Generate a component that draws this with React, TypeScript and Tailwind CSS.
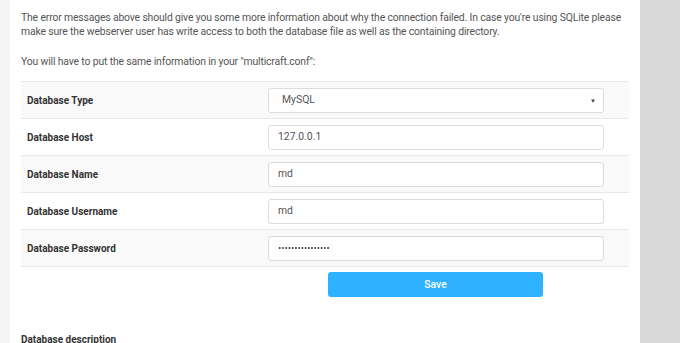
import React from "react";

const rows = [
  { label: "Database Type", kind: "select", value: "MySQL" },
  { label: "Database Host", kind: "text", value: "127.0.0.1" },
  { label: "Database Name", kind: "text", value: "md" },
  { label: "Database Username", kind: "text", value: "md" },
  { label: "Database Password", kind: "password", value: "••••••••••••••••" },
];

const App = () => {
  return (
    <div
      className="flex h-[343px] w-[680px] overflow-hidden bg-[#f5f5f5] text-[#555]"
      style={{ fontFamily: "Roboto, 'Liberation Sans', sans-serif" }}
    >
      <div className="ml-[10px] w-[630px] shrink-0 bg-white px-[11px] pt-[11px]">
        <p className="text-[10.4px] leading-[14px] tracking-[-0.15px]">
          The error messages above should give you some more information about why the connection failed. In case
          you're using SQLite please make sure the webserver user has write access to both the database file as well
          as the containing directory.
        </p>
        <p className="mt-[16px] text-[10.4px] leading-[14px] tracking-[-0.15px]">
          You will have to put the same information in your "multicraft.conf":
        </p>
        <div className="mt-[12px] w-[608px] border-t border-[#e8e8e8]">
          {rows.map((row, i) => (
            <div
              key={row.label}
              className={`flex h-[37px] items-center border-b border-[#e8e8e8] ${i % 2 === 0 ? "bg-[#f9f9f9]" : "bg-white"}`}
            >
              <div className="w-[247px] pl-[6px] text-[10px] font-bold text-[#333]">{row.label}</div>
              <div className="flex h-[25px] w-[336px] items-center rounded-[3px] border border-[#dcdcdc] bg-white pr-[7px] text-[10.4px] text-[#555]">
                {row.kind === "select" ? (
                  <>
                    <span className="flex-1 pl-[13px]">{row.value}</span>
                    <span className="text-[6px] text-[#444]">▼</span>
                  </>
                ) : row.kind === "password" ? (
                  <span className="pl-[9px] text-[9.6px] text-[#444]">{row.value}</span>
                ) : (
                  <span className="pl-[9px]">{row.value}</span>
                )}
              </div>
            </div>
          ))}
        </div>
        <div className="flex pt-[5px]">
          <button className="ml-[307px] h-[25px] w-[215px] rounded-[3px] bg-[#2eb2ff] text-[10.4px] font-medium text-white">
            Save
          </button>
        </div>
        <div className="mt-[35px] text-[10px] font-bold text-[#333]">Database description</div>
      </div>
      <div className="flex-1 bg-[#d9d9d9]" />
    </div>
  );
};

export default App;
